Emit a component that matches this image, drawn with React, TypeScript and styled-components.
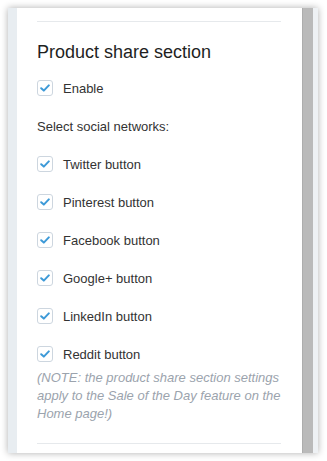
import styled, { createGlobalStyle } from 'styled-components';

const Global = createGlobalStyle`
  html, body {
    margin: 0;
    padding: 0;
    background: #ffffff;
  }
  body {
    font-family: "Liberation Sans", Arial, sans-serif;
  }
`;

// ===== frame =====
const Stage = styled.div`
  width: 327px;
  height: 461px;
  padding: 8px 9px 8px 8px;
  box-sizing: border-box;
`;

const Frame = styled.div`
  height: 445px;
  display: flex;
  box-shadow: 0 0 7px rgba(0, 0, 0, 0.32);
  background: #fff;
`;

const SideStrip = styled.div<{ w: number; tone: string }>`
  width: ${({ w }) => w}px;
  flex: none;
  background: ${({ tone }) => tone};
`;

const ScrollTrack = styled.div`
  width: 11px;
  flex: none;
  background: #bababa;
  border-left: 1px solid #adadad;
  box-sizing: border-box;
`;

const Content = styled.div`
  flex: 1;
  padding: 13px 21px 0 20px;
  display: flex;
  flex-direction: column;
`;

const Divider = styled.hr`
  margin: 0;
  border: none;
  height: 1px;
  background: #e6e9ec;
`;

const Title = styled.h2`
  margin: 19px 0 0;
  font-size: 18px;
  line-height: 22px;
  font-weight: 400;
  color: #1f1f1f;
`;

// ===== options =====
const Options = styled.div<{ top: number }>`
  display: flex;
  flex-direction: column;
  gap: 22px;
  margin-top: ${({ top }) => top}px;
`;

const Option = styled.label`
  display: flex;
  align-items: center;
  gap: 10px;
  height: 16px;
  font-size: 13px;
  color: #333;
`;

const Box = styled.span`
  width: 16px;
  height: 16px;
  flex: none;
  box-sizing: border-box;
  border: 1px solid #cdd6df;
  border-radius: 3px;
  background: #fff;
  display: flex;
  align-items: center;
  justify-content: center;
`;

const Label = styled.div`
  font-size: 13px;
  line-height: 16px;
  color: #333;
  margin-top: 23px;
`;

const Note = styled.p`
  margin: 7px 0 0;
  font-size: 13px;
  line-height: 18px;
  font-style: italic;
  color: #9ba3ad;
`;

const Bottom = styled(Divider)`
  margin-top: 20px;
`;

function Check() {
  return (
    <Box>
      <svg width="10" height="8" viewBox="0 0 10 8">
        <path d="M1.2 4.2 L3.8 6.6 L8.8 1.4" fill="none" stroke="#3d9ad8" strokeWidth="2" strokeLinecap="round" strokeLinejoin="round" />
      </svg>
    </Box>
  );
}

const networks = ['Twitter button', 'Pinterest button', 'Facebook button', 'Google+ button', 'LinkedIn button', 'Reddit button'];

export default function App() {
  return (
    <>
      <Global />
      <Stage>
        <Frame>
          <SideStrip w={9} tone="#e8edf1" />
          <Content>
            <Divider />
            <Title>Product share section</Title>
            <Options top={17}>
              <Option>
                <Check />
                Enable
              </Option>
            </Options>
            <Label>Select social networks:</Label>
            <Options top={21}>
              {networks.map(n => (
                <Option key={n}>
                  <Check />
                  {n}
                </Option>
              ))}
            </Options>
            <Note>
              (NOTE: the product share section settings apply to the Sale of the Day feature on the Home page!)
            </Note>
            <Bottom />
          </Content>
          <ScrollTrack />
          <SideStrip w={5} tone="#eef1f4" />
        </Frame>
      </Stage>
    </>
  );
}
